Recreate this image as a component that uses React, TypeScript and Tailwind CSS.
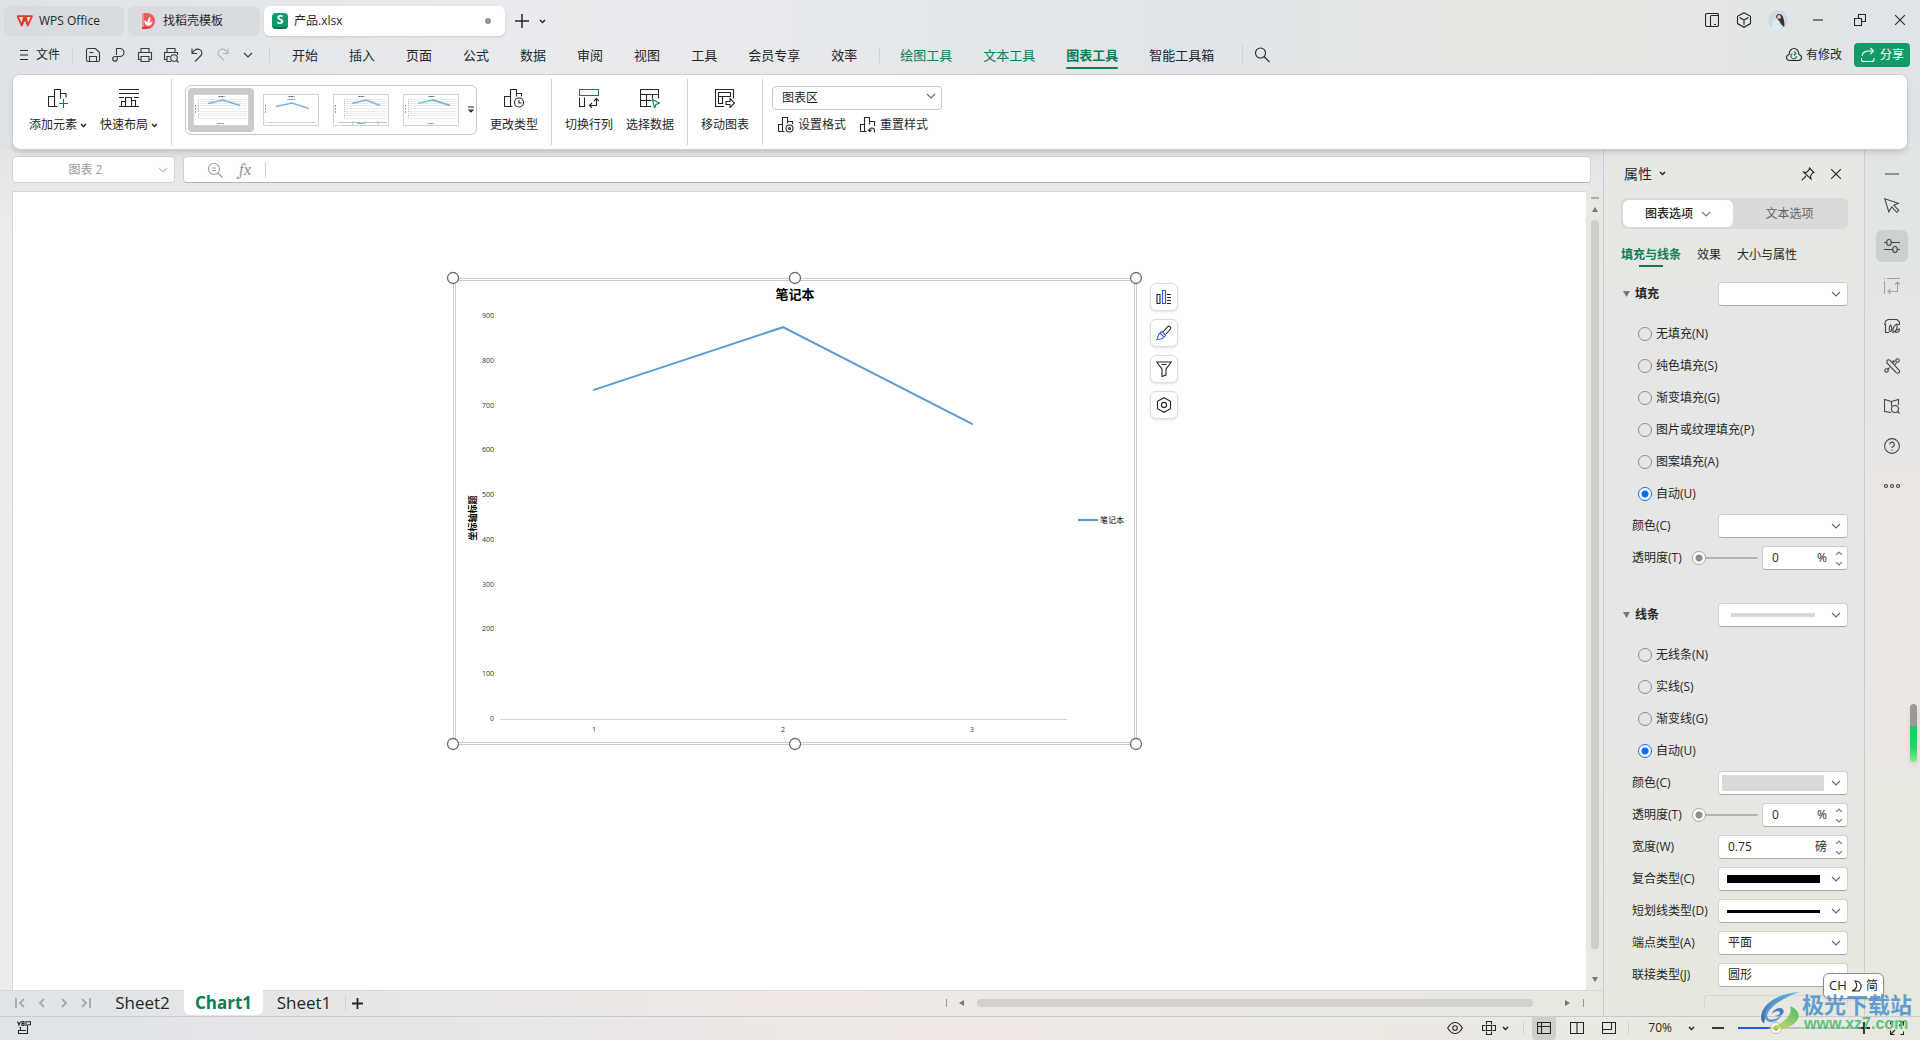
import React from "react";

type IconProps = {
  w?: number;
  h?: number;
  className?: string;
  children: React.ReactNode;
};

const Icon = ({ w = 16, h = 16, className = "", children }: IconProps) => (
  <svg
    width={w}
    height={h}
    viewBox={`0 0 ${w} ${h}`}
    fill="none"
    stroke="currentColor"
    strokeWidth="1.1"
    className={`shrink-0 ${className}`}
    aria-hidden="true"
  >
    {children}
  </svg>
);

const Chevron = ({ className = "" }: { className?: string }) => (
  <Icon w={10} h={6} className={className}>
    <path d="M1 1l4 4 4-4" />
  </Icon>
);

const Caret = ({ className = "" }: { className?: string }) => (
  <Icon w={7} h={5} className={className}>
    <path d="M1 1l2.5 2.5L6 1" strokeWidth="1.5" />
  </Icon>
);

const GREEN = "#0a7d55";

const quickTools = [
  {
    name: "保存",
    icon: (
      <Icon>
        <path d="M3 1.500h7.500l4 4v7.500a1.500 1.500 0 0 1-1.500 1.500H3A1.500 1.500 0 0 1 1.500 13V3A1.500 1.500 0 0 1 3 1.500zM4.500 14.500v-5h7v5M4.500 5.500h4" />
      </Icon>
    ),
  },
  {
    name: "输出",
    icon: (
      <Icon>
        <path d="M5.500 8V1.500H9a4 4 0 0 1 0 8H4a2.300 2.300 0 1 0 2.300 2.300V9.500" />
      </Icon>
    ),
  },
  {
    name: "打印",
    icon: (
      <Icon>
        <path d="M4 5.500v-4h8v4M4 12.500H1.500v-7h13v7H12M4 9.500h8v5H4z" />
      </Icon>
    ),
  },
  {
    name: "打印预览",
    icon: (
      <Icon>
        <path d="M4 5.500v-4h8v4M4 12.500H1.500v-7h13V8M8 14.500H4v-5h3" />
        <circle cx="11" cy="11" r="3.300" />
        <path d="M13.300 13.300l2.200 2.200" />
      </Icon>
    ),
  },
  {
    name: "撤销",
    icon: (
      <Icon>
        <path d="M3 1.500v5h5M3 6.500C5 3 8 1.500 10.500 2.500c3 1.300 3 4.500 1 6.500L6 14.500" />
      </Icon>
    ),
  },
  {
    name: "恢复",
    icon: (
      <Icon className="text-[#b4b6b9]">
        <path d="M13 1.500v5H8M13 6.500C11 3 8 1.500 5.500 2.500c-3 1.300-3 4.500-1 6.500L9 13.500" />
      </Icon>
    ),
  },
];

const menus = ["开始", "插入", "页面", "公式", "数据", "审阅", "视图", "工具", "会员专享", "效率"];

const ElementIcon = () => (
  <Icon w={20} h={20}>
    <path d="M.5 18.500v-10h6M6.500 18.500v-17h6v9M.5 18.500h9M12.500 5.500h5.500v4" />
    <path d="M15.500 11v9M11 15.500h9" stroke={GREEN} />
  </Icon>
);

const LayoutIcon = () => (
  <Icon w={20} h={20}>
    <path d="M0 1.500h20M0 5.500h20M0 9.500h5M15 9.500h5M0 18.500h20M2.500 18.500v-5h4v5M6.500 18.500v-9h6v9M12.500 12.500h4v6" />
  </Icon>
);

const TypeIcon = () => (
  <Icon w={20} h={20}>
    <path d="M.5 18.500v-10h6M6.500 18.500v-17h6v7M.5 18.500h8M12.500 5.500h5v3" />
    <circle cx="15" cy="14.500" r="4.500" />
    <path d="M15 12v3h2.500" />
  </Icon>
);

const SwapIcon = () => (
  <Icon w={20} h={20}>
    <path d="M.5 1.500h19v6H.5z" stroke={GREEN} />
    <path d="M.5 9.500v9h5v-9M10.500 17.500h7v-7M13 15l-2.500 2.500L13 20M15 13l2.500-2.500L20 13" />
  </Icon>
);

const SelectDataIcon = () => (
  <Icon w={20} h={20}>
    <path d="M11 18.500H.5v-17h18v9M.5 6.500h18M.5 12.500h11M6.500 6.500v12M12.500 6.500v4" />
    <path d="M12.500 11.500l7 3.500-3.500 1.500-1.500 3.500z" stroke={GREEN} />
  </Icon>
);

const MoveIcon = () => (
  <Icon w={20} h={20}>
    <path d="M9 18.500H.5v-17h18v9M3.500 4.500h12v4h-12zM3.500 8.500v7h4v-7M11 13.500h4v-3l4.500 4.500-4.500 4.500v-3h-4z" />
  </Icon>
);

const Divider = ({ className = "" }: { className?: string }) => (
  <div className={`w-px shrink-0 bg-[#d0d1d3] ${className}`} />
);

const RibbonButton = ({
  label,
  icon,
  caret,
}: {
  label: string;
  icon: React.ReactNode;
  caret?: boolean;
}) => (
  <button className="flex shrink-0 flex-col items-center gap-[9px] pt-[13px]">
    {icon}
    <span className="flex items-center gap-[3px] text-xs leading-4">
      {label}
      {caret && <Caret />}
    </span>
  </button>
);

const Thumbnail = ({ kind }: { kind: number }) => {
  const line = kind === 3 ? "#5fd0d4" : "#7fb2e0";
  const left = kind === 2 ? 11 : 5;
  return (
    <svg width="56" height="32" viewBox="0 0 56 32" aria-hidden="true">
      <rect x=".5" y=".5" width="55" height="31" fill="#fff" stroke="#d2d2d2" />
      <path d="M25.500 2.500h6" stroke="#666" strokeDasharray="2 .500" />
      {kind !== 1 &&
        [5, 7, 9, 11, 14, 17, 19, 21, 24].map((y) => (
          <path key={y} d={`M${left + 2} ${y}.5H54`} stroke="#ebebeb" />
        ))}
      {kind !== 1 && (
        <path d={`M${left}.5 5v20`} stroke="#a9b4dc" strokeDasharray="1 1" />
      )}
      <path d="M2.500 11v8" stroke="#a79a88" strokeDasharray="2 1" />
      {kind === 1 && <path d="M5 28.500h47" stroke="#cfcfcf" />}
      {kind === 2 && <path d="M5 28.500h49M20 27v4M32 27v4M45 27v4" stroke="#c0c0c0" />}
      <path d={kind === 1 ? "M24 5.500h8" : "M24 29.500h7"} stroke={line} />
      <path
        d={kind === 1 ? "M13 12.500L29 9l17 5.500" : kind === 2 ? "M19 9.500L33 6l14 5.500" : "M15 9.500L30 6l17 5.500"}
        fill="none"
        stroke={line}
        strokeWidth="1.500"
      />
      {kind === 3 && <path d="M30 6l17 5.500" stroke="#7fb2e0" strokeWidth="1.500" />}
    </svg>
  );
};

const TitleBar = () => (
  <div className="flex h-9 items-start text-xs">
    <div className="flex flex-1 items-center gap-1 pt-1.5 pl-1">
      <button className="flex h-[30px] w-[120px] items-center gap-1.5 rounded-md bg-[#d8dbe0] pl-[13px]">
        <Icon w={16} h={12}>
          <path
            d="M.5 1.200h6.800L4.800 10.500zM4.800 10.500L8 3.500l2.800 7L15 1.200H8.500l2.300 9"
            stroke="#ea3a28"
            strokeWidth="1.800"
            strokeLinejoin="round"
          />
        </Icon>
        WPS Office
      </button>
      <button className="flex h-[30px] w-[132px] items-center gap-[7px] rounded-md bg-[#d8dbe0] pl-3">
        <svg width="16" height="16" viewBox="0 0 16 16" aria-hidden="true">
          <path d="M2 0h5a8 8 0 0 1 0 16H2z" fill="#f0595b" />
          <path d="M2 0h2v16H2z" fill="#f58a88" />
          <path d="M2 16v-2h9l-4 2z" fill="#d83a3f" />
          <path d="M8 13c-3-1-4-3-3.500-6L7.500 9.500c0-3 1-4.500 2.500-6 1 3 0 5-.5 6.500L12.500 8c0 3-1.500 4.500-4.500 5z" fill="#fff" />
        </svg>
        找稻壳模板
      </button>
      <div className="flex h-[30px] w-[241px] items-center gap-1.5 rounded-md bg-white px-2 shadow-sm">
        <span className="flex h-4 w-4 items-center justify-center rounded-sm border-b-2 border-[#07734c] bg-[#119a68] font-bold text-white">
          S
        </span>
        <span className="flex-1">产品.xlsx</span>
        <span className="mr-1.5 h-1.5 w-1.5 rounded-full bg-[#8f9194]" />
      </div>
      <button aria-label="新建" className="ml-1.5">
        <Icon w={14} h={14}>
          <path d="M7 0v14M0 7h14" strokeWidth="1.500" />
        </Icon>
      </button>
      <button aria-label="标签列表" className="ml-1.5">
        <Caret />
      </button>
    </div>
    <div className="flex h-10 items-center">
      <button aria-label="侧栏" className="flex w-8 justify-center">
        <Icon w={14} h={14}>
          <path d="M5.500 13.500H2A1.500 1.500 0 0 1 .5 12V2A1.500 1.500 0 0 1 2 .5h10A1.500 1.500 0 0 1 13.500 2v10a1.500 1.500 0 0 1-1.500 1.500H6.500a1 1 0 0 1-1-1v-9a1 1 0 0 1 1-1h7M9 11.500h2" />
        </Icon>
      </button>
      <button aria-label="应用" className="flex w-8 justify-center">
        <Icon w={16} h={16}>
          <path d="M8 .7l6.500 3.600v7.300L8 15.300l-6.500-3.700V4.300zM3.500 5.500L8 8l4.500-2.500M8 8v5" />
        </Icon>
      </button>
      <button aria-label="账户" className="flex w-9 justify-center">
        <svg width="20" height="20" viewBox="0 0 20 20" aria-hidden="true">
          <circle cx="10" cy="10" r="10" fill="#cddbe5" />
          <path d="M8 7c0-4 6-4 7 0 1 3 2 7 1 10l-4-4z" fill="#3a2c30" />
          <path d="M4 18l1-7 4-2 3 3 1 7a10 10 0 0 1-9-1z" fill="#dcebf2" />
          <circle cx="11" cy="7" r="2" fill="#e7c2b2" />
        </svg>
      </button>
      <button aria-label="最小化" className="flex w-11 justify-center">
        <Icon w={10} h={10}>
          <path d="M0 5h10" />
        </Icon>
      </button>
      <button aria-label="还原" className="flex w-10 justify-center">
        <Icon w={12} h={12}>
          <path d="M.5 4.500h7v7h-7zM4.500 4.500v-4h7v7h-4" />
        </Icon>
      </button>
      <button aria-label="关闭" className="flex w-10 justify-center">
        <Icon w={10} h={10}>
          <path d="M0 0l10 10M10 0L0 10" />
        </Icon>
      </button>
    </div>
  </div>
);

const MenuBar = () => (
  <div className="flex h-[38px] items-center pr-2.5 pl-5">
    <button className="flex items-center gap-2 text-xs">
      <Icon w={8} h={12}>
        <path d="M0 1.500h8M0 6h8M0 10.500h8" />
      </Icon>
      文件
    </button>
    <Divider className="ml-3 h-4" />
    <div className="flex items-center gap-2.5 pl-3 text-[#3a3a3a]">
      {quickTools.map((tool) => (
        <button key={tool.name} aria-label={tool.name}>
          {tool.icon}
        </button>
      ))}
      <button aria-label="更多" className="ml-0.5">
        <Chevron />
      </button>
    </div>
    <Divider className="ml-4 h-4" />
    <nav className="flex items-center gap-[31px] pl-[22px] text-[13px] leading-5">
      {menus.map((name) => (
        <button key={name}>{name}</button>
      ))}
    </nav>
    <Divider className="ml-[22px] h-4" />
    <nav className="flex items-center gap-[31px] pl-5 text-[13px] leading-5 text-[#0a7d55]">
      <button>绘图工具</button>
      <button>文本工具</button>
      <button className="relative font-bold">
        图表工具
        <span className="absolute inset-x-0 -bottom-1 h-0.5 rounded bg-[#0a7d55]" />
      </button>
      <button className="text-[#262626]">智能工具箱</button>
    </nav>
    <Divider className="ml-7 h-5" />
    <button aria-label="搜索" className="ml-[11px]">
      <Icon>
        <circle cx="6.500" cy="6" r="5" />
        <path d="M10 9.500l5.500 5.500" />
      </Icon>
    </button>
    <button className="ml-auto flex items-center gap-1 text-xs">
      <Icon>
        <path d="M4 13.500C1 13.500.5 11.500.5 10.500s.5-2.500 2.500-3C3.500 4 5 1.500 8 1.500S12.500 4 13 7.500c2 .5 2.500 2 2.500 3s-.5 3-3.500 3z" />
        <path d="M6.500 6.500a2.800 2.800 0 1 0 4 2.500M8 4.500l2 2-2 2" stroke={GREEN} />
      </Icon>
      有修改
    </button>
    <button className="ml-3 flex h-6 w-14 items-center justify-center gap-1 rounded bg-[#109b69] text-xs text-white">
      <Icon w={16} h={16}>
        <path d="M2 9c.5-3.500 3-5 7-5h4M10.500 1l3 3-3 3M1.500 11v1.500a2 2 0 0 0 2 2H12a2 2 0 0 0 2-2V11" />
      </Icon>
      分享
    </button>
  </div>
);

const Ribbon = () => (
  <div className="relative z-10 mx-3 flex h-[76px] gap-[13px] rounded-lg border border-[#cdd0d2] bg-white px-4 shadow-md">
    <RibbonButton label="添加元素" icon={<ElementIcon />} caret />
    <RibbonButton label="快速布局" icon={<LayoutIcon />} caret />
    <Divider className="my-1" />
    <div className="my-2.5 flex h-[50px] shrink-0 items-center gap-1 rounded-md border border-[#c4c6c8] pr-0.5 pl-0.5">
      {[0, 1, 2, 3].map((kind) => (
        <button
          key={kind}
          aria-label={`样式 ${kind + 1}`}
          className={
            kind === 0
              ? "flex h-11 w-[66px] items-center justify-center rounded bg-[#cbcbcb]"
              : "flex h-11 w-[66px] items-center justify-center"
          }
        >
          <Thumbnail kind={kind} />
        </button>
      ))}
      <button aria-label="更多样式">
        <Icon w={6} h={8}>
          <path d="M0 1h6M1 4l2 2 2-2z" />
        </Icon>
      </button>
    </div>
    <RibbonButton label="更改类型" icon={<TypeIcon />} />
    <Divider className="my-1" />
    <RibbonButton label="切换行列" icon={<SwapIcon />} />
    <RibbonButton label="选择数据" icon={<SelectDataIcon />} />
    <Divider className="my-1" />
    <RibbonButton label="移动图表" icon={<MoveIcon />} />
    <Divider className="my-1" />
    <div className="-ml-1 flex flex-col gap-[9px] pt-[9px]">
      <div className="relative h-6 w-[170px]">
        <select
          aria-label="图表元素"
          className="h-full w-full appearance-none rounded border border-[#c4c6c8] bg-white pl-[9px] text-xs leading-4"
        >
          <option>图表区</option>
        </select>
        <Chevron className="pointer-events-none absolute top-[9px] right-1.5 text-[#666]" />
      </div>
      <div className="flex gap-3.5 pl-1.5 text-xs leading-4">
        <button className="flex items-center gap-1">
          <Icon>
            <path d="M.5 14.500v-7h4M4.500 14.500V.500h5v6M.5 14.500h6M9.500 4.500h5V7" />
            <circle cx="11.500" cy="11.500" r="3.500" />
            <circle cx="11.500" cy="11.500" r="1" />
          </Icon>
          设置格式
        </button>
        <button className="flex items-center gap-1">
          <Icon>
            <path d="M.5 14.500v-7h4M4.500 14.500V.500h5v7M.5 14.500h6M9.500 4.500h5V9M14.500 15.500v-2a2.500 2.500 0 0 0-5 0v1M8 12.500l1.500 2 2-1.500" />
          </Icon>
          重置样式
        </button>
      </div>
    </div>
  </div>
);

const FormulaBar = () => (
  <div className="flex h-[27px] shrink-0 gap-2 pr-3 pl-3 text-[#9b9b9b]">
    <div className="flex w-[163px] items-center rounded border border-[#cfd1d2] bg-white pr-1.5">
      <input
        aria-label="名称框"
        defaultValue="图表 2"
        className="min-w-0 flex-1 bg-transparent text-center text-xs outline-none"
      />
      <Chevron className="text-[#c0c0c0]" />
    </div>
    <div className="flex flex-1 items-center rounded border border-[#cfd1d2] border-b-[#b4b6b6] bg-white pl-[23px]">
      <Icon>
        <circle cx="7" cy="7" r="5.500" />
        <path d="M11 11l4.500 4.500M5 6h4M5 8.500h4" />
      </Icon>
      <span className="ml-4 font-serif text-[17px] leading-5 italic">fx</span>
      <Divider className="ml-3.5 h-4" />
      <input aria-label="编辑栏" className="min-w-0 flex-1 bg-transparent px-2 text-xs outline-none" />
    </div>
  </div>
);

const values = [735, 875, 659];
const ticks = [900, 800, 700, 600, 500, 400, 300, 200, 100, 0];
const toY = (v: number) => 448 - (v * 403) / 900;
const toX = (i: number) => 148 + i * 189;
const handles = [7, 349, 690];

const Chart = () => (
  <svg width="698" height="481" viewBox="0 0 698 481" fill="#333" fontSize="7" className="shrink-0">
    <rect x="7.500" y="7.500" width="683" height="466" fill="#fff" stroke="#cfcfcf" />
    <rect x="9.500" y="9.500" width="679" height="462" fill="none" stroke="#cfcfcf" />
    <text x="349" y="28" textAnchor="middle" fontSize="13" fontWeight="bold" fill="#000">
      笔记本
    </text>
    {ticks.map((t) => (
      <text key={t} x="48" y={toY(t) + 2} textAnchor="end">
        {t}
      </text>
    ))}
    <path d="M54 448.500h567" stroke="#d4d4d4" />
    {values.map((v, i) => (
      <text key={v} x={toX(i)} y="461" textAnchor="middle">
        {i + 1}
      </text>
    ))}
    <polyline
      points={values.map((v, i) => `${toX(i)},${toY(v)}`).join(" ")}
      fill="none"
      stroke="#5b9bd5"
      strokeWidth="2"
      strokeLinecap="round"
    />
    <text
      transform="translate(30 247) rotate(-90)"
      textAnchor="middle"
      fontSize="9"
      fontWeight="bold"
      fill="#000"
    >
      坐标轴标题
    </text>
    <path d="M632 249h20" stroke="#5b9bd5" strokeWidth="2" />
    <text x="654" y="252" fontSize="8" fill="#000">
      笔记本
    </text>
    {handles.map((x) => (
      <g key={x} fill="#fff" stroke="#6b6b6b" strokeWidth="1.300">
        <circle cx={x} cy="7" r="5.500" />
        <circle cx={x} cy="473" r="5.500" />
      </g>
    ))}
  </svg>
);

const chartButtons = [
  {
    name: "图表元素",
    icon: (
      <Icon>
        <path d="M1 5.500h3v9H1zM11 5.500h4M11 8.500h4M11 11.500h4M11 14.500h4" />
        <path d="M6.500 1.500h3v13h-3z" stroke="#2f5be0" />
      </Icon>
    ),
  },
  {
    name: "图表样式",
    icon: (
      <Icon>
        <path d="M7 7l5-5.500c1-1 3.500.5 2.500 2.500L9.500 9.500" />
        <path d="M1 14.500c1-1 .5-5 3-6.500l4 4c-2 2.500-5 2.500-7 2.500zM4 8l2-1.500L9.500 10 8 12" stroke="#2f5be0" />
      </Icon>
    ),
  },
  {
    name: "图表筛选器",
    icon: (
      <Icon>
        <path d="M.7 1h14.600L10 8v6l-4 1.500V8zM5.500 3.500h5" />
      </Icon>
    ),
  },
  {
    name: "设置图表区域格式",
    icon: (
      <Icon>
        <path d="M8 .7l6.500 3.600v7.400L8 15.300l-6.500-3.600V4.300z" />
        <circle cx="8" cy="8" r="2.600" />
      </Icon>
    ),
  },
];

const Canvas = () => (
  <div className="mt-2 ml-3 flex min-h-0 flex-1">
    <div className="flex min-w-0 flex-1 items-start gap-1.5 overflow-hidden border-t border-l border-[#d5d7d8] bg-white pt-[79px] pl-[433px]">
      <Chart />
      <div className="flex flex-col gap-2 pt-3">
        {chartButtons.map((b) => (
          <button
            key={b.name}
            aria-label={b.name}
            className="flex h-7 w-7 items-center justify-center rounded-md border border-[#dedede] bg-white shadow"
          >
            {b.icon}
          </button>
        ))}
      </div>
    </div>
    <div className="flex w-[17px] flex-col items-center bg-[#e6e8e3] pt-1.5 pb-2 text-[#777]">
      <div className="h-0.5 w-2 bg-[#aeb0ac]" />
      <Icon w={6} h={5} className="mt-2">
        <path d="M0 5h6L3 0z" fill="currentColor" stroke="none" />
      </Icon>
      <div className="mt-2 mb-7 w-2 flex-1 rounded bg-[#cccec9]" />
      <Icon w={6} h={5}>
        <path d="M0 0h6L3 5z" fill="currentColor" stroke="none" />
      </Icon>
    </div>
  </div>
);

const SheetBar = () => (
  <div className="flex h-[26px] shrink-0 items-center border-t border-[#d5d7d8] bg-linear-to-r from-[#e0e4e8] via-[#f0e9e6] to-[#e7e9e1] pb-px">
    <div className="flex w-[101px] gap-3 pl-[15px] text-[#a6a8ab]">
      <button aria-label="第一张">
        <Icon w={10} h={10}>
          <path d="M1 0v10M9 1L5 5l4 4" strokeWidth="1.800" />
        </Icon>
      </button>
      <button aria-label="上一张">
        <Icon w={10} h={10}>
          <path d="M7 1L3 5l4 4" strokeWidth="1.800" />
        </Icon>
      </button>
      <button aria-label="下一张">
        <Icon w={10} h={10}>
          <path d="M3 1l4 4-4 4" strokeWidth="1.800" />
        </Icon>
      </button>
      <button aria-label="最后一张">
        <Icon w={10} h={10}>
          <path d="M1 1l4 4-4 4M9 0v10" strokeWidth="1.800" />
        </Icon>
      </button>
    </div>
    <div className="-mt-px flex h-[25px] text-[17px] leading-6">
      <button className="w-[83px]">Sheet2</button>
      <button className="w-[79px] rounded-b-md bg-white font-bold text-[#0a7d55]">Chart1</button>
      <button className="w-[82px]">Sheet1</button>
    </div>
    <Divider className="h-4" />
    <button aria-label="新建工作表" className="ml-1.5">
      <Icon w={11} h={11}>
        <path d="M5.500 0v11M0 5.500h11" strokeWidth="1.800" />
      </Icon>
    </button>
    <div className="ml-auto flex w-[638px] items-center gap-3 text-[#777]">
      <div className="h-2 w-px bg-[#9c9a98]" />
      <Icon w={6} h={6}>
        <path d="M5 0v6L0 3z" fill="currentColor" stroke="none" />
      </Icon>
      <div className="h-2 flex-1 rounded bg-[#d2cfcc]" />
      <Icon w={6} h={6} className="ml-5">
        <path d="M0 0v6l5-3z" fill="currentColor" stroke="none" />
      </Icon>
      <div className="h-2 w-px bg-[#9c9a98]" />
    </div>
    <div className="w-[19px]" />
  </div>
);

const Row = ({ label, id, children }: { label: string; id: string; children: React.ReactNode }) => (
  <div className="flex h-6 items-center justify-between pl-[11px]">
    <label htmlFor={id}>{label}</label>
    {children}
  </div>
);

const Dropdown = ({
  id,
  label,
  option = "",
  children,
}: {
  id: string;
  label?: string;
  option?: string;
  children?: React.ReactNode;
}) => (
  <div className="relative h-6 w-[130px]">
    <select
      id={id}
      aria-label={label}
      className="h-full w-full appearance-none rounded border border-[#cfd0cf] border-b-[#a9aaa9] bg-white pl-[9px] text-xs leading-4"
    >
      <option>{option}</option>
    </select>
    {children && (
      <div className="pointer-events-none absolute inset-y-0 right-6 left-0 flex items-center">
        {children}
      </div>
    )}
    <Chevron className="pointer-events-none absolute top-[9px] right-[7px] text-[#666]" />
  </div>
);

const Spinner = ({
  id,
  value,
  unit,
  className,
}: {
  id: string;
  value: string;
  unit: string;
  className: string;
}) => (
  <div
    className={`flex h-6 items-center rounded border border-[#cfd0cf] border-b-[#a9aaa9] bg-white pr-1 pl-[9px] ${className}`}
  >
    <input id={id} defaultValue={value} className="min-w-0 flex-1 bg-transparent outline-none" />
    <span>{unit}</span>
    <div className="ml-2 flex flex-col gap-[7px] text-[#777]">
      <button aria-label="增加">
        <Icon w={8} h={4} className="block">
          <path d="M1 4l3-3 3 3" />
        </Icon>
      </button>
      <button aria-label="减少">
        <Icon w={8} h={4} className="block">
          <path d="M1 0l3 3 3-3" />
        </Icon>
      </button>
    </div>
  </div>
);

const Radios = ({ name, items }: { name: string; items: string[] }) => (
  <>
    {items.map((item, i) => (
      <label key={item} className="flex h-6 items-center gap-1 pl-[17px]">
        <input
          type="radio"
          name={name}
          defaultChecked={i === items.length - 1}
          className="h-3.5 w-3.5 appearance-none rounded-full border border-[#8c8c8c] checked:border-[#0a6cff] checked:bg-[radial-gradient(circle,#0a6cff_3px,white_4px)]"
        />
        {item}
      </label>
    ))}
  </>
);

const Opacity = ({ id }: { id: string }) => (
  <div className="flex h-6 items-center pl-[11px]">
    <label htmlFor={id} className="flex-1">
      透明度(T)
    </label>
    <input
      type="range"
      aria-label="透明度"
      defaultValue={0}
      className="mr-1 h-0.5 w-[66px] appearance-none rounded bg-[#b3b4b3] [&::-webkit-slider-thumb]:h-3.5 [&::-webkit-slider-thumb]:w-3.5 [&::-webkit-slider-thumb]:appearance-none [&::-webkit-slider-thumb]:rounded-full [&::-webkit-slider-thumb]:border [&::-webkit-slider-thumb]:border-[#a8a8a8] [&::-webkit-slider-thumb]:bg-[radial-gradient(circle,#8c8c8c_3px,white_4px)]"
    />
    <Spinner id={id} value="0" unit="%" className="w-[86px]" />
  </div>
);

const SectionHead = ({ title, children }: { title: string; children: React.ReactNode }) => (
  <div className="mb-2 flex h-6 items-center">
    <Icon w={7} h={6} className="mx-0.5 text-[#777]">
      <path d="M0 0h7L3.500 6z" fill="currentColor" stroke="none" />
    </Icon>
    <h3 className="flex-1 pl-[3px] font-bold">{title}</h3>
    {children}
  </div>
);

const Panel = () => (
  <aside className="flex w-[262px] shrink-0 flex-col overflow-hidden border-x border-[#cbcdcd] bg-linear-to-b from-[#e6e8e3] via-[#e5e6e7] to-[#e8e8e0] pr-4 pl-[17px] text-xs">
    <div className="flex h-[49px] shrink-0 items-center pl-[3px]">
      <h2 className="text-sm">属性</h2>
      <Caret className="ml-[7px]" />
      <button aria-label="固定" className="mr-4 ml-auto">
        <Icon w={14} h={14}>
          <path d="M8.500 1l4.500 4.500-1.500.5-2 3 .5 3-7.500-7 3 .5 2.500-2.500zM5 9L.7 13.300" />
        </Icon>
      </button>
      <button aria-label="关闭面板" className="mr-[7px]">
        <Icon w={10} h={10}>
          <path d="M0 0l10 10M10 0L0 10" />
        </Icon>
      </button>
    </div>
    <div className="flex h-[31px] shrink-0 rounded-md bg-[#d9dad9] p-0.5">
      <button className="flex w-[110px] items-center justify-center gap-2 rounded-md bg-white font-medium">
        图表选项
        <Chevron className="text-[#777]" />
      </button>
      <button className="flex-1 text-[#666]">文本选项</button>
    </div>
    <div className="mt-4 flex h-5 shrink-0 items-center gap-4">
      <button className="relative font-bold text-[#0a7d55]">
        填充与线条
        <span className="absolute -bottom-1 left-[18px] h-0.5 w-6 bg-[#0a7d55]" />
      </button>
      <button>效果</button>
      <button>大小与属性</button>
    </div>
    <section className="mt-[17px] flex flex-col gap-2">
      <SectionHead title="填充">
        <Dropdown id="fill-preset" label="填充预设" />
      </SectionHead>
      <Radios
        name="fill"
        items={["无填充(N)", "纯色填充(S)", "渐变填充(G)", "图片或纹理填充(P)", "图案填充(A)", "自动(U)"]}
      />
      <Row label="颜色(C)" id="fill-color">
        <Dropdown id="fill-color" />
      </Row>
      <Opacity id="fill-opacity" />
    </section>
    <section className="mt-[33px] flex flex-col gap-2">
      <SectionHead title="线条">
        <Dropdown id="line-preset" label="线条预设">
          <div className="mr-[9px] ml-[13px] h-1 flex-1 bg-[#d9d9d9]" />
        </Dropdown>
      </SectionHead>
      <Radios name="line" items={["无线条(N)", "实线(S)", "渐变线(G)", "自动(U)"]} />
      <Row label="颜色(C)" id="line-color">
        <Dropdown id="line-color">
          <div className="ml-1 h-4 flex-1 bg-[#d9d9d9]" />
        </Dropdown>
      </Row>
      <Opacity id="line-opacity" />
      <Row label="宽度(W)" id="line-width">
        <Spinner id="line-width" value="0.75" unit="磅" className="w-[130px]" />
      </Row>
      <Row label="复合类型(C)" id="compound">
        <Dropdown id="compound">
          <div className="mr-1 ml-[9px] h-2 flex-1 bg-black" />
        </Dropdown>
      </Row>
      <Row label="短划线类型(D)" id="dash">
        <Dropdown id="dash">
          <div className="mr-1 ml-[9px] h-[3px] flex-1 bg-black" />
        </Dropdown>
      </Row>
      <Row label="端点类型(A)" id="cap">
        <Dropdown id="cap" option="平面" />
      </Row>
      <Row label="联接类型(J)" id="join">
        <Dropdown id="join" option="圆形" />
      </Row>
      <div className="ml-auto h-3 w-[144px] rounded-t border border-b-0 border-[#d4d5ce]" />
    </section>
  </aside>
);

const sideTools = [
  {
    name: "选择",
    icon: (
      <Icon>
        <path d="M.8.8l4 13 3-5 5 5.500 2-2-5-5 4.500-2z" />
      </Icon>
    ),
  },
  {
    name: "属性",
    icon: (
      <Icon>
        <path d="M0 4.500h2.500M7.500 4.500H16M0 11.500h8.500M13.500 11.500H16" />
        <ellipse cx="5" cy="4.500" rx="2.300" ry="3" />
        <ellipse cx="11" cy="11.500" rx="2.300" ry="3" />
      </Icon>
    ),
  },
  {
    name: "裁剪",
    icon: (
      <Icon className="text-[#a0a2a2]">
        <path d="M3 .5h13M.5 3v13M4 13.500h9.500V4M6.500 11L4 13.500 6.500 16M11 6.500L13.500 4 16 6.500M0 .5h1" />
      </Icon>
    ),
  },
  {
    name: "动画",
    icon: (
      <Icon>
        <path d="M5 14.500H1.500v-8H.8L1.500 3 4 1.500h9L15.500 4v2.500H14M6 14c-1.500-3-1-5 .5-7 1.500 2 1.500 5 0 7M9 14.500c-.5-4 1-7 4-8.500.5 4-.5 7-4 8.500zM11.500 14.500c0-2 1.500-3.500 4-3.500 0 2-1.500 3.500-4 3.500" />
      </Icon>
    ),
  },
  {
    name: "工具",
    icon: (
      <Icon>
        <path d="M3 2.500a1.800 1.800 0 0 1 3 0L15 12a1.800 1.800 0 0 1-2.800 2.500L3 5zM11 6.500l1.500-1.500M5.500 9.500L3.500 11.500" />
        <circle cx="13.500" cy="2.500" r="1.700" />
        <circle cx="9.500" cy="3.500" r=".800" />
        <circle cx="2.500" cy="12.500" r="1.700" />
      </Icon>
    ),
  },
  {
    name: "查阅",
    icon: (
      <Icon>
        <path d="M7 14.500l-6.500-1v-12l7 2 7-2V7M7.500 3.500V8" />
        <circle cx="11" cy="11" r="3.500" />
        <path d="M13.500 13.500l2 2" />
      </Icon>
    ),
  },
  {
    name: "帮助",
    icon: (
      <Icon>
        <circle cx="8" cy="8" r="7.400" />
        <path d="M5.700 6.500a2.300 2.300 0 1 1 3.300 2c-.8.4-1 .8-1 1.500M8 11.500v1.200" />
      </Icon>
    ),
  },
  {
    name: "更多",
    icon: (
      <Icon>
        <circle cx="2" cy="8" r="1.500" />
        <circle cx="8" cy="8" r="1.500" />
        <circle cx="14" cy="8" r="1.500" />
      </Icon>
    ),
  },
];

const SideBar = () => (
  <div className="flex w-[55px] shrink-0 flex-col items-center bg-linear-to-b from-[#e0e5e6] via-[#ece7e4] to-[#e7e9df] pt-[13px] pr-px text-[#444]">
    <button aria-label="收起" className="flex h-6 w-8 items-center justify-center">
      <span className="h-0.5 w-3.5 bg-[#8f9090]" />
    </button>
    {sideTools.map((tool) => (
      <div key={tool.name} className="flex h-10 items-center">
        <button
          aria-label={tool.name}
          className={
            tool.name === "属性"
              ? "flex h-8 w-8 items-center justify-center rounded-md bg-[#cdd0d0]"
              : "flex h-8 w-8 items-center justify-center"
          }
        >
          {tool.icon}
        </button>
      </div>
    ))}
  </div>
);

const StatusBar = () => (
  <div className="flex h-6 shrink-0 items-center border-t border-[#c9cbcb] bg-linear-to-r from-[#e0e4e8] via-[#f0e9e6] to-[#e7e9e1] pr-4 pb-px pl-[17px] text-xs">
    <button aria-label="宏">
      <Icon w={14} h={14}>
        <path d="M.5.5L2 4 3.500.5M5 .5v4h2v-4zM5 2.500h2M9 5V.700h4.500v3h-3M10.500 4v8.500h-9v-3h7.500M3.500 9.500v-3h-1" />
      </Icon>
    </button>
    <div className="ml-auto flex items-center">
      <button aria-label="护眼模式">
        <Icon>
          <path d="M.7 8C3 4 5 2.500 8 2.500S13 4 15.300 8C13 12 11 13.500 8 13.500S3 12 .7 8z" />
          <circle cx="8" cy="8" r="2.300" />
        </Icon>
      </button>
      <button aria-label="阅读模式" className="ml-[19px] flex items-center gap-1.5">
        <Icon w={14} h={14}>
          <path d="M4.500 3.500v-3h5v3M4.500 10.500v3h5v-3M3.500 4.500h-3v5h3M10.500 4.500h3v5h-3M4.500 4.500h5v5h-5z" />
        </Icon>
        <Caret />
      </button>
      <Divider className="ml-3.5 h-3.5" />
      <button
        aria-label="普通视图"
        className="ml-2 flex h-6 w-6 items-center justify-center rounded bg-[#cfd0cb]"
      >
        <Icon w={14} h={14}>
          <path d="M.5 1.500h13v11H.500zM.5 5.500h13M4.500 1.500v11" />
        </Icon>
      </button>
      <button aria-label="分页预览" className="ml-3.5">
        <Icon w={14} h={14}>
          <path d="M.5 1.500h13v11H.500zM7 1.500v11" />
        </Icon>
      </button>
      <button aria-label="页面布局" className="ml-[18px]">
        <Icon w={14} h={14}>
          <path d="M2.500 1.500h11v11H.500M2.500 1.500h-2v11M.5 8.500h9v-7M2.500 12.500h11" />
        </Icon>
      </button>
      <Divider className="ml-3 h-3.5" />
      <button className="ml-[19px] flex items-center gap-4">
        70%
        <Caret />
      </button>
      <button aria-label="缩小" className="ml-[17px]">
        <Icon w={12} h={12}>
          <path d="M0 6h12" strokeWidth="1.800" />
        </Icon>
      </button>
      <input
        type="range"
        aria-label="缩放"
        defaultValue={30}
        className="ml-3.5 h-0.5 w-[120px] appearance-none bg-[linear-gradient(to_right,#1f56e4_30%,#bfc2bc_30%)] [&::-webkit-slider-thumb]:h-3 [&::-webkit-slider-thumb]:w-3 [&::-webkit-slider-thumb]:appearance-none [&::-webkit-slider-thumb]:rounded-full [&::-webkit-slider-thumb]:border [&::-webkit-slider-thumb]:border-[#b8b8b8] [&::-webkit-slider-thumb]:bg-[radial-gradient(circle,#8c8c8c_2px,white_3px)]"
      />
      <button aria-label="放大">
        <Icon w={12} h={12}>
          <path d="M6 0v12M0 6h12" strokeWidth="1.800" />
        </Icon>
      </button>
      <button aria-label="全屏" className="ml-5">
        <Icon w={14} h={14}>
          <path d="M9.500.5h4v4M13.500.5L9 5M4.500 13.500h-4v-4M.5 13.500L5 9M.5 3.500v-3h3M13.500 10.500v3h-3" />
        </Icon>
      </button>
    </div>
  </div>
);

const Watermark = () => (
  <div className="pointer-events-none absolute right-2 bottom-2 z-20 flex items-end opacity-85">
    <svg width="42" height="40" viewBox="0 0 43 42" aria-hidden="true">
      <defs>
        <linearGradient id="wm" x1="0" y1="1" x2="1" y2="0">
          <stop offset="0" stopColor="#2a4fa8" />
          <stop offset="1" stopColor="#4fb8ee" />
        </linearGradient>
        <linearGradient id="wg" x1="0" y1="1" x2="1" y2="0">
          <stop offset="0" stopColor="#d8e24a" />
          <stop offset="1" stopColor="#35b060" />
        </linearGradient>
      </defs>
      <path d="M41 0C25 1 5 8 1 23c-1 5 0 9 3 10C4 19 20 7 41 0z" fill="url(#wm)" />
      <path d="M30 5C20 8 9 16 7 24c-1 7 9 6 15 0-2 7-13 11-17 4C2 19 14 8 30 5z" fill="#3d8fd4" />
      <path d="M12 23c2-6 10-8 12-4s-5 8-9 6c4 0 6-2 5-4s-5-1-8 2z" fill="#2f6fc0" />
      <path d="M31 15c2 6-1 12-9 17-4 3-9 5-14 6 14 3 26-1 31-9 3-5 0-11-8-14z" fill="url(#wg)" />
    </svg>
    <div className="flex flex-col">
      <span className="text-[22px] leading-6 font-bold text-[#4a90cf]">极光下载站</span>
      <span className="pl-0.5 font-['Liberation_Sans'] text-base leading-4 font-bold text-[#4cb96a]">
        www.xz7.com
      </span>
    </div>
  </div>
);

const App = () => (
  <div className="relative flex h-screen flex-col overflow-hidden bg-[linear-gradient(to_right,#dfe3e8,#eaebed_30%,#e1e5e9_63%,#e7e8e2_80%,#dfe4e7)] font-['Open_Sans','Noto_Sans_CJK_SC',sans-serif] text-[#262626]">
    <TitleBar />
    <MenuBar />
    <Ribbon />
    <div className="-mt-px flex min-h-0 flex-1">
      <main className="flex min-w-0 flex-1 flex-col bg-linear-to-b from-[#e2e4e6] to-[#ededed] to-10% pt-[7px]">
        <FormulaBar />
        <Canvas />
        <SheetBar />
      </main>
      <Panel />
      <SideBar />
    </div>
    <StatusBar />
    <div className="absolute top-[704px] right-[3px] h-[58px] w-[7px] rounded-full bg-[linear-gradient(to_bottom,#9c9a97_38%,#22c55e_38%,#2bd068_75%,#7df08a)] shadow-md" />
    <div className="absolute right-9 bottom-[41px] z-10 flex h-[26px] w-[61px] items-center justify-center gap-1 rounded-md border border-[#8f8f8f] bg-white text-[13px] shadow">
      CH
      <Icon w={11} h={12}>
        <path d="M4 1c6 0 8 6 4 10H1c5-2 6-6 3-10z" />
      </Icon>
      <span className="text-xs">简</span>
    </div>
    <Watermark />
  </div>
);

export default App;
